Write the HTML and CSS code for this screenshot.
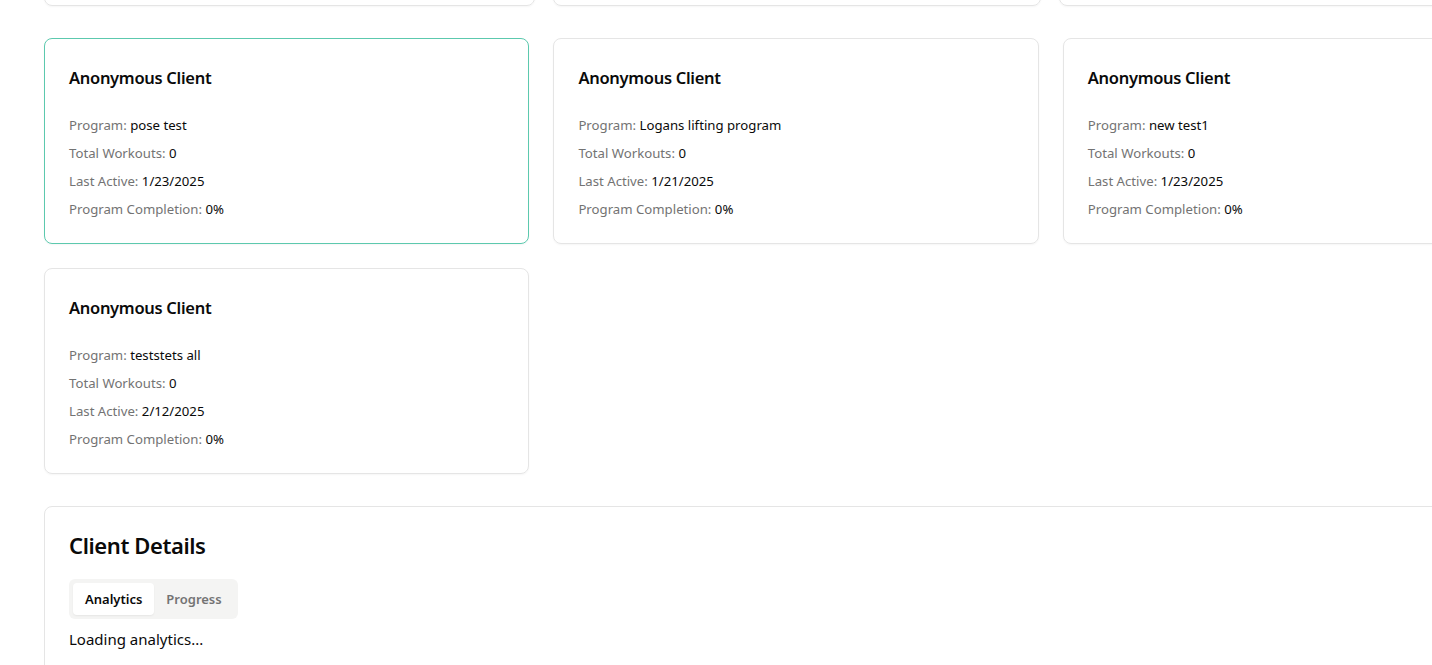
FILE: index.html
```html
<!DOCTYPE html>
<html lang="en">
<head>
<meta charset="utf-8">
<title>Clients</title>
<link rel="stylesheet" href="styles.css">
</head>
<body>
<main class="page">
  <div class="stat-row">
    <div class="stat-card"></div>
    <div class="stat-card"></div>
    <div class="stat-card"></div>
  </div>

  <div class="client-grid">
    <div class="client-card selected">
      <h3 class="client-name">Anonymous Client</h3>
      <div class="client-info">
        <p><span class="label">Program:</span> pose test</p>
        <p><span class="label">Total Workouts:</span> 0</p>
        <p><span class="label">Last Active:</span> 1/23/2025</p>
        <p><span class="label">Program Completion:</span> 0%</p>
      </div>
    </div>
    <div class="client-card">
      <h3 class="client-name">Anonymous Client</h3>
      <div class="client-info">
        <p><span class="label">Program:</span> Logans lifting program</p>
        <p><span class="label">Total Workouts:</span> 0</p>
        <p><span class="label">Last Active:</span> 1/21/2025</p>
        <p><span class="label">Program Completion:</span> 0%</p>
      </div>
    </div>
    <div class="client-card">
      <h3 class="client-name">Anonymous Client</h3>
      <div class="client-info">
        <p><span class="label">Program:</span> new test1</p>
        <p><span class="label">Total Workouts:</span> 0</p>
        <p><span class="label">Last Active:</span> 1/23/2025</p>
        <p><span class="label">Program Completion:</span> 0%</p>
      </div>
    </div>
    <div class="client-card">
      <h3 class="client-name">Anonymous Client</h3>
      <div class="client-info">
        <p><span class="label">Program:</span> teststets all</p>
        <p><span class="label">Total Workouts:</span> 0</p>
        <p><span class="label">Last Active:</span> 2/12/2025</p>
        <p><span class="label">Program Completion:</span> 0%</p>
      </div>
    </div>
  </div>

  <section class="details-card">
    <h2 class="details-title">Client Details</h2>
    <div class="tabs">
      <button class="tab active">Analytics</button>
      <button class="tab">Progress</button>
    </div>
    <p class="loading">Loading analytics...</p>
  </section>
</main>
</body>
</html>
```

FILE: styles.css
```css
html, body {
  margin: 0;
  padding: 0;
  background: #ffffff;
  overflow: hidden;
}

body {
  font-family: "Noto Sans", "Open Sans", sans-serif;
  color: #0a0a0a;
}

.page {
  padding-left: 44px;
  width: 1560px;
}

.stat-row {
  display: grid;
  grid-template-columns: 491px 488px 489px;
  gap: 18px;
  margin-top: -94px;
}

.stat-card {
  height: 98px;
  border: 1px solid #e5e5e5;
  border-radius: 8px;
  box-shadow: 0 1px 2px rgba(0, 0, 0, 0.04);
}

.client-grid {
  display: grid;
  grid-template-columns: repeat(3, 485.4px);
  gap: 24px;
  margin-top: 32px;
}

.client-card {
  border: 1px solid #e5e5e5;
  border-radius: 8px;
  padding: 24px;
  box-shadow: 0 1px 2px rgba(0, 0, 0, 0.04);
}

.client-card.selected {
  border-color: #5cc9ae;
}

.client-name {
  margin: 0 0 24px;
  padding-top: 1px;
  height: 27px;
  font-size: 16.5px;
  line-height: 28px;
  font-weight: 600;
  letter-spacing: -0.3px;
}

.client-info {
  display: flex;
  flex-direction: column;
  gap: 8px;
}

.client-info p {
  margin: 0;
  font-size: 13.2px;
  line-height: 20px;
  color: #0a0a0a;
}

.label {
  color: #737373;
}

.details-card {
  margin-top: 32px;
  width: 1503px;
  box-sizing: border-box;
  border: 1px solid #e5e5e5;
  border-radius: 8px;
  padding: 24px;
  height: 200px;
}

.details-title {
  margin: 0 0 20px;
  font-size: 22px;
  line-height: 28px;
  height: 28px;
  font-weight: 600;
  letter-spacing: -0.4px;
}

.tabs {
  display: inline-flex;
  align-items: center;
  padding: 4px;
  background: #f4f4f3;
  border-radius: 6px;
}

.tab {
  font-family: inherit;
  border: none;
  background: transparent;
  height: 32px;
  padding: 0 12px;
  font-size: 13px;
  font-weight: 600;
  color: #737373;
  border-radius: 4px;
}

.tab.active {
  background: #ffffff;
  color: #0a0a0a;
  box-shadow: 0 1px 2px rgba(0, 0, 0, 0.06);
}

.loading {
  margin: 8px 0 0;
  font-size: 15px;
  line-height: 24px;
}
```
